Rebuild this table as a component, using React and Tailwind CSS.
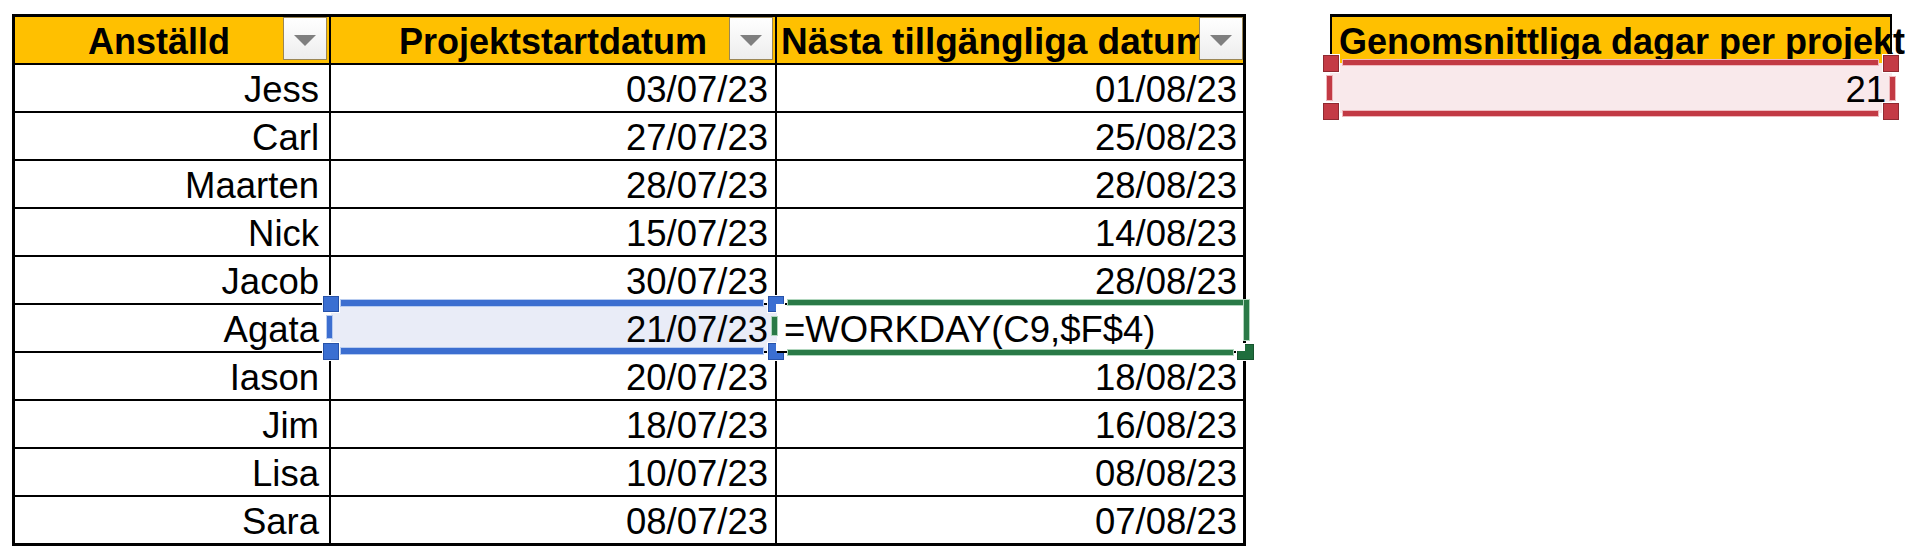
import React from "react";

const names = ["Jess", "Carl", "Maarten", "Nick", "Jacob", "Agata", "Iason", "Jim", "Lisa", "Sara"];
const starts = ["03/07/23", "27/07/23", "28/07/23", "15/07/23", "30/07/23", "21/07/23", "20/07/23", "18/07/23", "10/07/23", "08/07/23"];
const ends = ["01/08/23", "25/08/23", "28/08/23", "14/08/23", "28/08/23", "=WORKDAY(C9,$F$4)", "18/08/23", "16/08/23", "08/08/23", "07/08/23"];

function Dropdown({ edge }) {
  return (
    <div
      className={
        "absolute top-0 w-[44px] h-[43px] border border-[#9a8656] bg-linear-to-b from-white to-[#ededed] flex items-center justify-center pt-[3px] " +
        (edge ? "right-0" : "right-[2px]")
      }
    >
      <svg width="22" height="11" viewBox="0 0 22 11">
        <path d="M0 0H22L11 11Z" fill="#7f7f7f" />
      </svg>
    </div>
  );
}

function BlueFrame() {
  return (
    <>
      <div className="absolute left-[10px] w-[422px] top-[-5px] h-[6px] bg-[#3c6ed0] shadow-[0_0_0_1px_#b8ccf0]" />
      <div className="absolute left-[10px] w-[422px] top-[43px] h-[6px] bg-[#3c6ed0] shadow-[0_0_0_1px_#b8ccf0]" />
      <div className="absolute left-[-4px] w-[5px] top-[11px] h-[22px] bg-[#3c6ed0] shadow-[0_0_0_1px_#b8ccf0]" />
      <div className="absolute left-[-8px] w-[16px] top-[-9px] h-[16px] bg-[#3b6fd2] border border-[#2752a8] shadow-[0_0_0_1px_#fff]" />
      <div className="absolute left-[-8px] w-[16px] top-[38px] h-[17px] bg-[#3b6fd2] border border-[#2752a8] shadow-[0_0_0_1px_#fff]" />
      <div className="absolute left-[437px] w-[16px] top-[-9px] h-[16px] bg-[#3b6fd2] border border-[#2752a8] shadow-[0_0_0_1px_#fff]">
        <div className="absolute right-[-1px] bottom-[-1px] w-[8px] h-[8px] bg-white" />
      </div>
      <div className="absolute left-[437px] w-[16px] top-[38px] h-[17px] bg-[#3b6fd2] border border-[#2752a8] shadow-[0_0_0_1px_#fff]">
        <div className="absolute right-[-1px] top-[-1px] w-[8px] h-[8px] bg-white" />
      </div>
    </>
  );
}

function GreenFrame() {
  return (
    <>
      <div className="absolute left-[11px] w-[460px] top-[-5px] h-[5px] bg-[#2a7a47] shadow-[0_0_0_1px_#b0d6bd]" />
      <div className="absolute left-[467px] w-[5px] top-[-5px] h-[40px] bg-[#2a7a47] shadow-[0_0_0_1px_#b0d6bd]" />
      <div className="absolute left-[11px] w-[445px] top-[45px] h-[5px] bg-[#2a7a47] shadow-[0_0_0_1px_#b0d6bd]" />
      <div className="absolute left-[-5px] w-[5px] top-[12px] h-[18px] bg-[#2a7a47] shadow-[0_0_0_1px_#b0d6bd]" />
      <div className="absolute left-[460px] w-[17px] top-[39px] h-[16px] bg-[#1f6e3d] border border-[#17552f] shadow-[0_0_0_1px_#fff]">
        <div className="absolute left-[-1px] top-[-1px] w-[8px] h-[7px] bg-white" />
      </div>
    </>
  );
}

function RedFrame() {
  return (
    <>
      <div className="absolute left-[13px] right-[14px] top-[-3px] h-[5px] bg-[#c23a44] shadow-[0_0_0_1px_#efb9bd]" />
      <div className="absolute left-[13px] right-[14px] top-[48px] h-[5px] bg-[#c23a44] shadow-[0_0_0_1px_#efb9bd]" />
      <div className="absolute left-[-3px] w-[5px] top-[13px] h-[24px] bg-[#c23a44] shadow-[0_0_0_1px_#efb9bd]" />
      <div className="absolute left-[560px] w-[5px] top-[14px] h-[23px] bg-[#c23a44] shadow-[0_0_0_1px_#efb9bd]" />
      <div className="absolute left-[-7px] w-[16px] top-[-8px] h-[17px] bg-[#c43b45] border border-[#8f2a31] shadow-[0_0_0_1px_#fff]" />
      <div className="absolute left-[-7px] w-[16px] top-[40px] h-[17px] bg-[#c43b45] border border-[#8f2a31] shadow-[0_0_0_1px_#fff]" />
      <div className="absolute left-[553px] w-[16px] top-[-8px] h-[17px] bg-[#c43b45] border border-[#8f2a31] shadow-[0_0_0_1px_#fff]" />
      <div className="absolute left-[553px] w-[16px] top-[40px] h-[17px] bg-[#c43b45] border border-[#8f2a31] shadow-[0_0_0_1px_#fff]" />
    </>
  );
}

export default function App() {
  return (
    <div className="w-[1905px] h-[560px] bg-white flex items-start pt-[14px] pl-[12px] text-black font-['Liberation_Sans',Arial,sans-serif]">
      <div className="w-[1234px] border-[3px] border-black grid grid-cols-[316px_446px_466px]">
        <div className="relative h-[48px] border-b-2 border-r-2 border-black bg-[#ffc000] font-bold text-[36px] pt-[4px] leading-[42px] text-center pr-[26px] whitespace-nowrap">
          Anställd
          <Dropdown />
        </div>
        <div className="relative h-[48px] border-b-2 border-r-2 border-black bg-[#ffc000] font-bold text-[36px] pt-[4px] leading-[42px] text-center whitespace-nowrap">
          Projektstartdatum
          <Dropdown />
        </div>
        <div className="relative h-[48px] border-b-2 border-black bg-[#ffc000] font-bold text-[37px] pt-[4px] leading-[42px] pl-[4px] whitespace-nowrap overflow-hidden">
          Nästa tillgängliga datum
          <Dropdown edge />
        </div>

        {names.map((n, i) => {
          const last = i === names.length - 1;
          const sel = i === 5;
          const rowCls =
            "text-[36.5px] pt-[4px] leading-[42px] whitespace-nowrap " +
            (last ? "h-[46px] " : "h-[48px] border-b-2 border-b-black ");
          return (
            <React.Fragment key={n}>
              <div className={rowCls + "text-right pr-[10px] border-r-2 " + (sel ? "border-r-white" : "border-r-black")}>
                {n}
              </div>
              <div
                className={
                  rowCls +
                  "text-right pr-[7px] border-r-2 " +
                  (sel ? "relative bg-[#e9ecf7] border-r-[#e9ecf7]" : "border-r-black")
                }
              >
                {starts[i]}
                {sel && <BlueFrame />}
              </div>
              <div className={rowCls + (sel ? "relative text-left pl-[7px]" : "text-right pr-[6px]")}>
                {ends[i]}
                {sel && <GreenFrame />}
              </div>
            </React.Fragment>
          );
        })}
      </div>

      <div className="ml-[84px] w-[562px]">
        <div className="h-[49px] border-t-[3px] border-x-2 border-black bg-[#ffc000] font-bold text-[36px] pt-[4px] leading-[42px] pl-[7px] whitespace-nowrap">
          Genomsnittliga dagar per projekt
        </div>
        <div className="relative h-[50px] bg-[#f9e9eb] text-right text-[36.5px] pt-[6px] leading-[42px] pr-[6px]">
          21
          <RedFrame />
        </div>
      </div>
    </div>
  );
}
